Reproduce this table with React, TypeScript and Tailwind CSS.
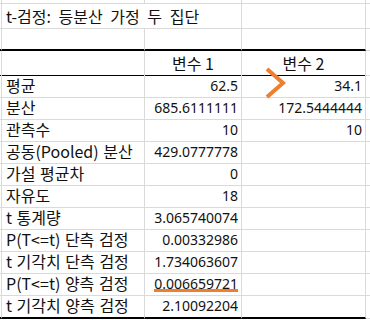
import type { ReactNode } from "react";

const num = "font-['Noto_Sans',sans-serif] text-[14px]";
const kor = "font-['Noto_Sans_CJK_KR','Noto_Sans',sans-serif] text-[16px]";

type Edge = "gray" | "thick" | "thin";

const rows: { label: string; a: string; b?: string }[] = [
  { label: "평균", a: "62.5", b: "34.1" },
  { label: "분산", a: "685.6111111", b: "172.5444444" },
  { label: "관측수", a: "10", b: "10" },
  { label: "공동(Pooled) 분산", a: "429.0777778" },
  { label: "가설 평균차", a: "0" },
  { label: "자유도", a: "18" },
  { label: "t 통계량", a: "3.065740074" },
  { label: "P(T<=t) 단측 검정", a: "0.00332986" },
  { label: "t 기각치 단측 검정", a: "1.734063607" },
  { label: "P(T<=t) 양측 검정", a: "0.006659721" },
  { label: "t 기각치 양측 검정", a: "2.10092204" },
];

function edgeClass(edge: Edge) {
  if (edge === "thick") return "border-b-2 border-b-black";
  if (edge === "thin") return "border-b border-b-black";
  return "border-b border-b-[#dadada]";
}

function Row({
  h,
  edge = "gray",
  children,
}: {
  h: string;
  edge?: Edge;
  children: ReactNode;
}) {
  return (
    <div className={`grid grid-cols-[2px_143px_97px_124px_1fr] ${h}`}>
      <div className={`border-r border-r-[#dadada] ${edgeClass(edge)}`} />
      {children}
      <div className="border-b border-b-[#dadada]" />
    </div>
  );
}

function Cell({
  edge = "gray",
  className = "",
  children,
}: {
  edge?: Edge;
  className?: string;
  children?: ReactNode;
}) {
  return (
    <div
      className={`flex items-center whitespace-nowrap border-r border-r-[#dadada] ${edgeClass(edge)} ${className}`}
    >
      {children}
    </div>
  );
}

export default function App() {
  return (
    <div className="relative h-[320px] w-[370px] overflow-hidden bg-white text-[#111]">
      <Row h="h-[4px]">
        <Cell />
        <Cell />
        <Cell />
      </Row>
      <Row h="h-[25px]">
        <Cell className={`col-span-2 pl-1 [word-spacing:4px] ${kor}`}>
          t-검정: 등분산 가정 두 집단
        </Cell>
        <Cell />
      </Row>
      <Row h="h-[22px]" edge="thick">
        <Cell edge="thick" />
        <Cell edge="thick" />
        <Cell edge="thick" />
      </Row>
      <Row h="h-[22px]" edge="thin">
        <Cell edge="thin" />
        <Cell edge="thin" className={`justify-center ${kor}`}>
          변수 1
        </Cell>
        <Cell edge="thin" className={`justify-center ${kor}`}>
          변수 2
        </Cell>
      </Row>
      {rows.map((r, i) => {
        const edge: Edge = i === rows.length - 1 ? "thick" : "gray";
        return (
          <Row key={r.label} h="h-[22px]" edge={edge}>
            <Cell edge={edge} className={`pl-1 [word-spacing:1px] ${kor}`}>
              {r.label}
            </Cell>
            <Cell edge={edge} className={`justify-end pr-[3px] ${num}`}>
              {r.a}
            </Cell>
            <Cell edge={edge} className={`justify-end pr-[3px] ${num}`}>
              {r.b}
            </Cell>
          </Row>
        );
      })}

      {/* 주석: 주황 화살표, 밑줄 */}
      <svg
        className="absolute left-[264px] top-[66px]"
        width="24"
        height="34"
        viewBox="0 0 24 34"
        fill="none"
      >
        <polyline points="3,3 19,17 3,31" stroke="#ee7f2f" strokeWidth="4" />
      </svg>
      <div className="absolute left-[154px] top-[289px] h-[3px] w-[84px] bg-[#ee7f2f]" />
    </div>
  );
}
